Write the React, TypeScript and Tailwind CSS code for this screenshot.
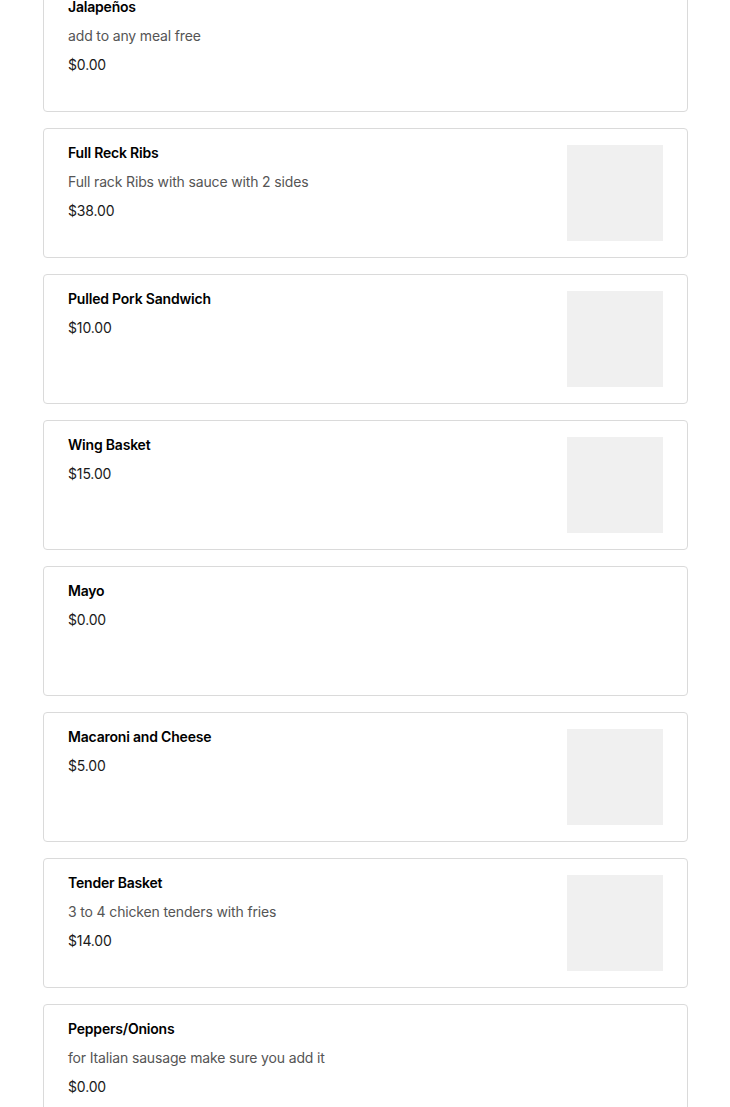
import React from "react";

type Item = { title: string; desc?: string; price: string; img: boolean };

const items: Item[] = [
  { title: "Jalapeños", desc: "add to any meal free", price: "$0.00", img: false },
  { title: "Full Reck Ribs", desc: "Full rack Ribs with sauce with 2 sides", price: "$38.00", img: true },
  { title: "Pulled Pork Sandwich", price: "$10.00", img: true },
  { title: "Wing Basket", price: "$15.00", img: true },
  { title: "Mayo", price: "$0.00", img: false },
  { title: "Macaroni and Cheese", price: "$5.00", img: true },
  { title: "Tender Basket", desc: "3 to 4 chicken tenders with fries", price: "$14.00", img: true },
  { title: "Peppers/Onions", desc: "for Italian sausage make sure you add it", price: "$0.00", img: false },
];

export default function App() {
  return (
    <div
      className="h-[1107px] overflow-hidden bg-white"
      style={{ fontFamily: "Inter, 'Liberation Sans', sans-serif" }}
    >
      <div className="flex flex-col gap-4 pl-[43px] pr-[42px] -mt-[18px]">
        {items.map((it, i) => (
          <div
            key={i}
            className="flex min-h-[130px] justify-between rounded-[4px] border border-[#dadada] bg-white py-4 pl-6 pr-6"
          >
            <div className="-mt-[2px] flex flex-col">
              <div className="text-[14px] font-semibold leading-5 tracking-[-0.2px] text-black">
                {it.title}
              </div>
              {it.desc && (
                <div className="mt-[9px] text-[14px] leading-5 tracking-[-0.15px] text-[#555555]">
                  {it.desc}
                </div>
              )}
              <div className="mt-[9px] text-[14px] leading-5 tracking-[-0.15px] text-[#1a1a1a]">
                {it.price}
              </div>
            </div>
            {it.img && <div className="h-24 w-24 shrink-0 bg-[#f0f0f0]" />}
          </div>
        ))}
      </div>
    </div>
  );
}
